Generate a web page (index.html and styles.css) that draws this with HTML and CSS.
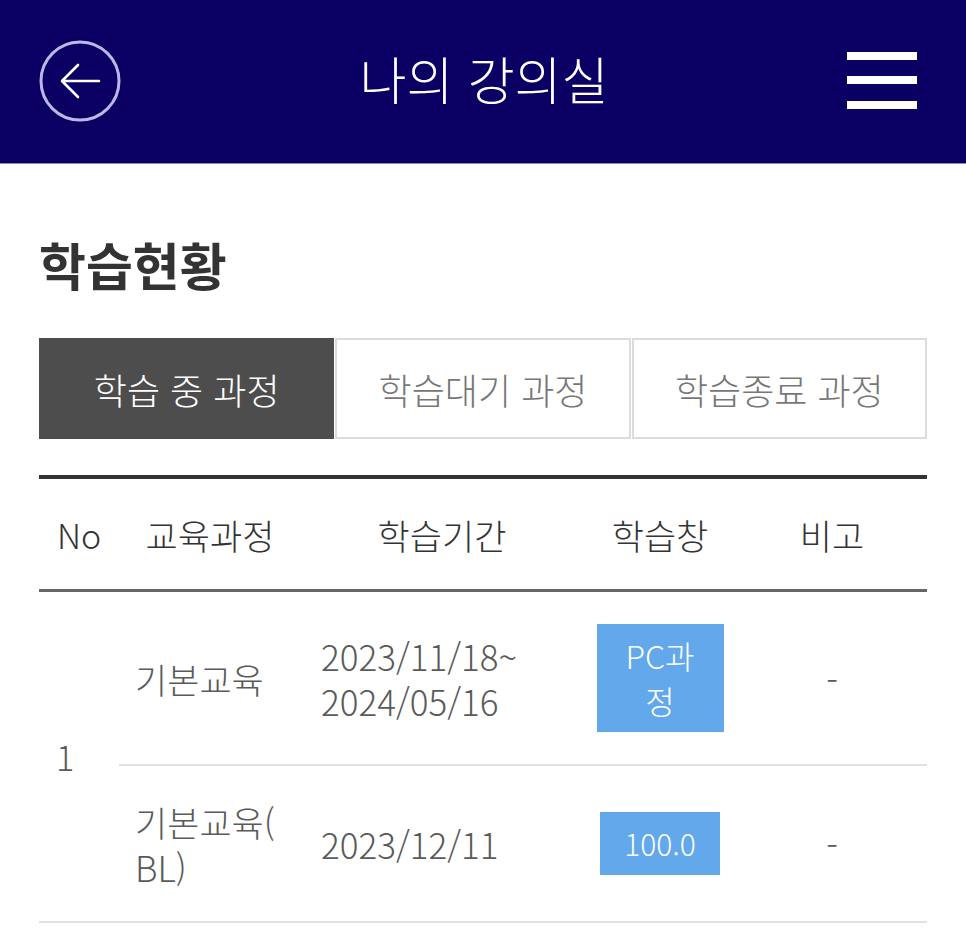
FILE: index.html
```html
<!DOCTYPE html>
<html lang="ko">
<head>
    <meta charset="UTF-8">
    <meta name="viewport" content="width=device-width, initial-scale=1.0">
    <title>나의 강의실</title>
    <link rel="stylesheet" href="styles.css">
</head>
<body>
    <header class="top-bar">
        <a href="#" class="back-btn" aria-label="뒤로">
            <svg width="84" height="84" viewBox="0 0 84 84">
                <circle cx="42" cy="42" r="39" fill="none" stroke="#bdb6e6" stroke-width="3"/>
                <path d="M24 42 H61 M24 42 L40 26 M24 42 L40 58" fill="none" stroke="#ffffff" stroke-width="2.6" stroke-linecap="round" stroke-linejoin="round"/>
            </svg>
        </a>
        <h1 class="page-title">나의 강의실</h1>
        <a href="#" class="menu-btn" aria-label="메뉴">
            <span></span>
            <span></span>
            <span></span>
        </a>
    </header>

    <main class="content">
        <h2 class="section-title">학습현황</h2>

        <div class="tabs">
            <a href="#" class="tab active">학습 중 과정</a>
            <a href="#" class="tab">학습대기 과정</a>
            <a href="#" class="tab">학습종료 과정</a>
        </div>

        <table class="course-table">
            <colgroup>
                <col class="col-no">
                <col class="col-course">
                <col class="col-period">
                <col class="col-window">
                <col class="col-note">
            </colgroup>
            <thead>
                <tr>
                    <th>No</th>
                    <th>교육과정</th>
                    <th>학습기간</th>
                    <th>학습창</th>
                    <th>비고</th>
                </tr>
            </thead>
            <tbody>
                <tr class="row-first">
                    <td class="no" rowspan="2">1</td>
                    <td class="course">기본교육</td>
                    <td class="period">2023/11/18~<br>2024/05/16</td>
                    <td class="window"><a href="#" class="study-btn tall">PC과정</a></td>
                    <td class="note">-</td>
                </tr>
                <tr class="row-last">
                    <td class="course">기본교육(BL)</td>
                    <td class="period">2023/12/11</td>
                    <td class="window"><a href="#" class="study-btn">100.0</a></td>
                    <td class="note">-</td>
                </tr>
            </tbody>
        </table>
    </main>
</body>
</html>
```

FILE: styles.css
```css
body {
    margin: 0;
    padding: 0;
    font-family: "Noto Sans CJK KR", "Noto Sans", sans-serif;
    font-weight: 300;
    background: #ffffff;
    color: #5a5a5a;
}

a {
    text-decoration: none;
    color: inherit;
}

.top-bar {
    height: 163px;
    background: #0a0063;
    border-bottom: 1px solid #8c86c8;
    display: flex;
    align-items: center;
    justify-content: space-between;
    padding: 0 49px 0 38px;
    position: relative;
}

.back-btn {
    display: flex;
    width: 84px;
    height: 84px;
    margin-top: -2px;
}

.page-title {
    margin: 0;
    font-size: 51px;
    font-weight: 300;
    color: #ffffff;
    position: absolute;
    left: 0;
    right: 0;
    text-align: center;
    pointer-events: none;
    padding-left: 2px;
    margin-top: -8px;
}

.menu-btn {
    display: flex;
    flex-direction: column;
    justify-content: space-between;
    width: 70px;
    height: 57px;
    margin-top: -3px;
}

.menu-btn span {
    display: block;
    height: 8px;
    background: #ffffff;
}

.content {
    padding: 62px 39px 0 39px;
}

.section-title {
    margin: 0 0 36px 0;
    font-size: 51px;
    font-weight: 700;
    color: #333;
    line-height: 76px;
}

.tabs {
    display: flex;
    height: 101px;
    margin-bottom: 36px;
}

.tab {
    flex: 1;
    display: flex;
    align-items: center;
    justify-content: center;
    border: 2px solid #dcdcdc;
    font-size: 36px;
    color: #777;
    box-sizing: border-box;
}

.tab + .tab {
    margin-left: 1px;
}

.tab.active {
    background: #4d4d4d;
    border-color: #4d4d4d;
    color: #ffffff;
}

.course-table {
    width: 100%;
    border-collapse: collapse;
    border-top: 4px solid #333;
    font-size: 35px;
}

.col-no { width: 80px; }
.col-course { width: 182px; }
.col-period { width: 282px; }
.col-window { width: 154px; }

.course-table th {
    font-weight: 300;
    color: #333;
    height: 110px;
    padding: 0;
    border-bottom: 3px solid #666;
    text-align: center;
}

.course-table th:first-child {
    font-size: 34px;
}

.course-table td {
    line-height: 45px;
    padding: 0;
    vertical-align: middle;
}

.row-first td {
    height: 172px;
    border-bottom: 2px solid #e2e2e2;
}

.row-last td {
    height: 155px;
    border-bottom: 2px solid #e2e2e2;
}

.course-table td.no {
    text-align: left;
    padding-left: 17px;
    font-size: 34px;
    border-bottom: 2px solid #e2e2e2;
}

.course-table td.course {
    padding: 0 8px 0 16px;
    word-break: break-all;
    line-break: anywhere;
}

.course-table td.period {
    padding-left: 20px;
}

.course-table td.window {
    text-align: center;
}

.course-table td.note {
    text-align: center;
}

.study-btn {
    display: inline-block;
    max-width: 127px;
    box-sizing: border-box;
    padding: 9px 24px;
    background: #63a8ea;
    color: #ffffff;
    font-size: 30px;
    line-height: 45px;
}

.study-btn.tall {
    width: 127px;
    padding: 9px 24px;
    font-size: 32px;
}
```
